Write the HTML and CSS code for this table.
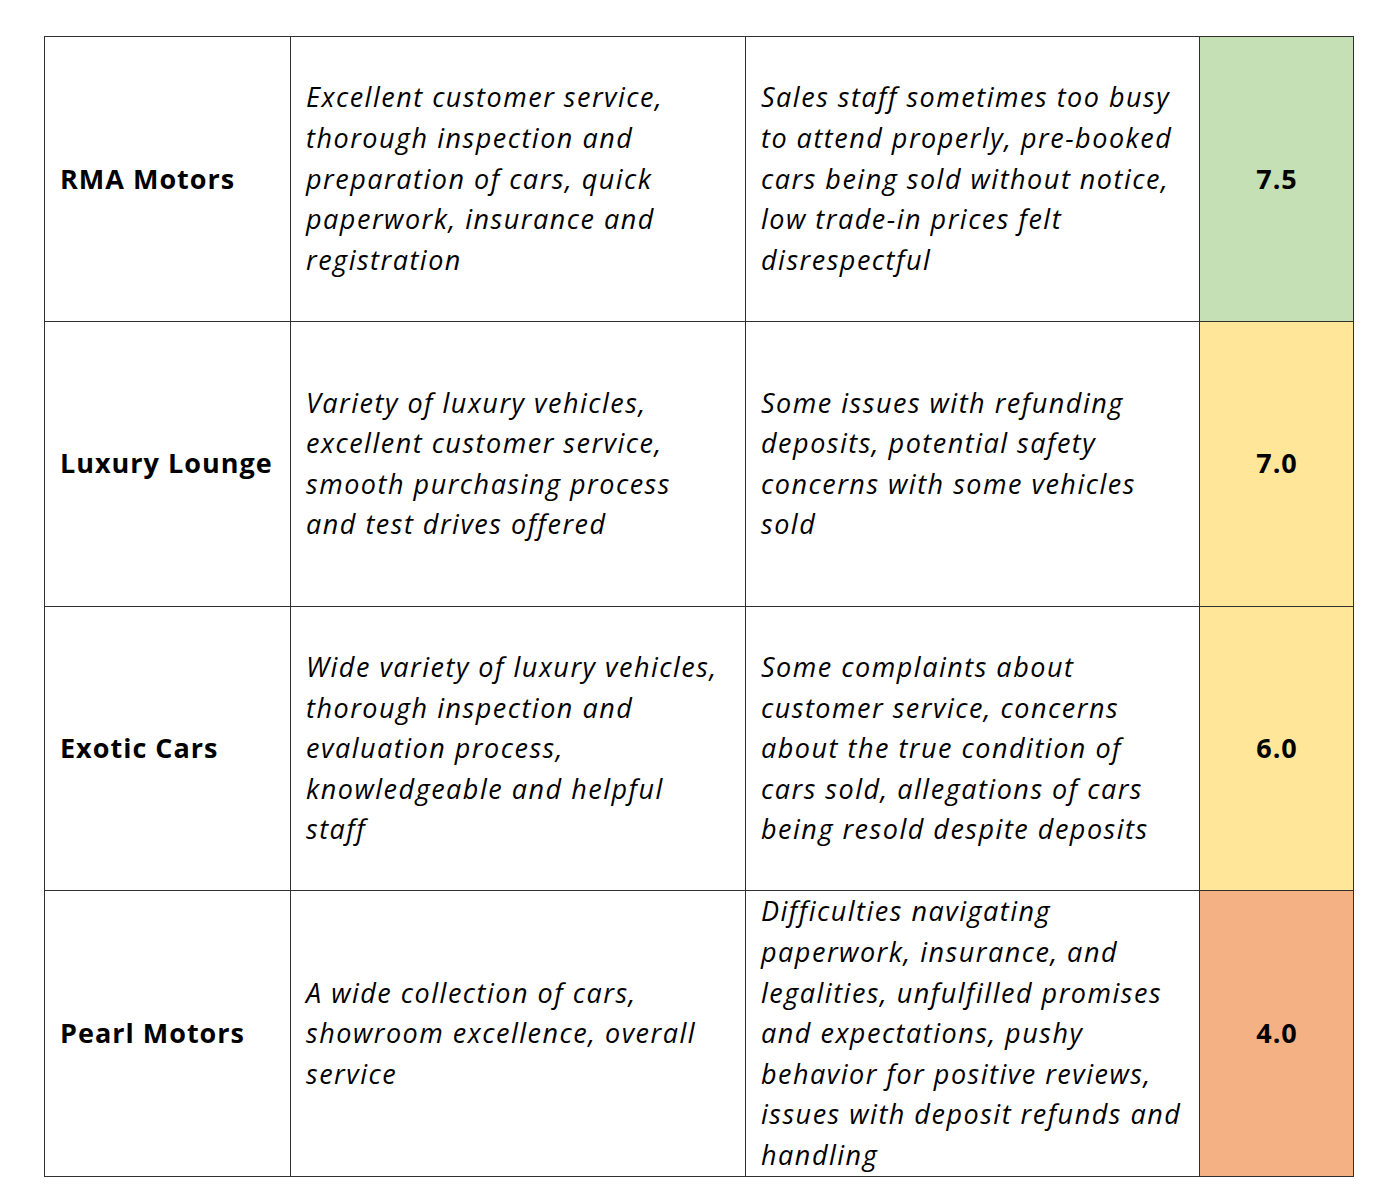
FILE: index.html
```html
<!DOCTYPE html>
<html lang="en">
<head>
<meta charset="utf-8">
<title>Dealer comparison</title>
<link rel="stylesheet" href="styles.css">
</head>
<body>
<table class="compare">
  <colgroup>
    <col class="c-name">
    <col class="c-pros">
    <col class="c-cons">
    <col class="c-score">
  </colgroup>
  <tbody>
    <tr>
      <td class="name">RMA Motors</td>
      <td class="text">Excellent customer service,<br>thorough inspection and<br>preparation of cars, quick<br>paperwork, insurance and<br>registration</td>
      <td class="text">Sales staff sometimes too busy<br>to attend properly, pre-booked<br>cars being sold without notice,<br>low trade-in prices felt<br>disrespectful</td>
      <td class="score green">7.5</td>
    </tr>
    <tr>
      <td class="name">Luxury Lounge</td>
      <td class="text">Variety of luxury vehicles,<br>excellent customer service,<br>smooth purchasing process<br>and test drives offered</td>
      <td class="text">Some issues with refunding<br>deposits, potential safety<br>concerns with some vehicles<br>sold</td>
      <td class="score yellow">7.0</td>
    </tr>
    <tr>
      <td class="name">Exotic Cars</td>
      <td class="text">Wide variety of luxury vehicles,<br>thorough inspection and<br>evaluation process,<br>knowledgeable and helpful<br>staff</td>
      <td class="text">Some complaints about<br>customer service, concerns<br>about the true condition of<br>cars sold, allegations of cars<br>being resold despite deposits</td>
      <td class="score yellow">6.0</td>
    </tr>
    <tr>
      <td class="name">Pearl Motors</td>
      <td class="text">A wide collection of cars,<br>showroom excellence, overall<br>service</td>
      <td class="text">Difficulties navigating<br>paperwork, insurance, and<br>legalities, unfulfilled promises<br>and expectations, pushy<br>behavior for positive reviews,<br>issues with deposit refunds and<br>handling</td>
      <td class="score orange">4.0</td>
    </tr>
  </tbody>
</table>
</body>
</html>
```

FILE: styles.css
```css
html, body {
  margin: 0;
  padding: 0;
  background: #ffffff;
}

body {
  padding: 36px 0 0 44px;
  font-family: "Open Sans", "Noto Sans", sans-serif;
  color: #000000;
}

.compare {
  border-collapse: collapse;
  table-layout: fixed;
  width: 1309px;
}

.c-name { width: 246px; }
.c-pros { width: 455px; }
.c-cons { width: 454px; }
.c-score { width: 154px; }

.compare td {
  border: 1.5px solid #303030;
  height: 284.8px;
  box-sizing: border-box;
  vertical-align: middle;
  padding: 0 2px 0 15px;
  font-size: 27px;
  line-height: 40.6px;
  white-space: nowrap;
}

.name {
  font-weight: 700;
  letter-spacing: 1px;
}

.text {
  font-style: italic;
  letter-spacing: 1.5px;
}

.score {
  font-weight: 700;
  text-align: center;
  letter-spacing: 1px;
}

.compare td.score {
  padding: 0 0 0 1px;
}

.green { background: #c5e0b4; }
.yellow { background: #ffe699; }
.orange { background: #f4b183; }
```
